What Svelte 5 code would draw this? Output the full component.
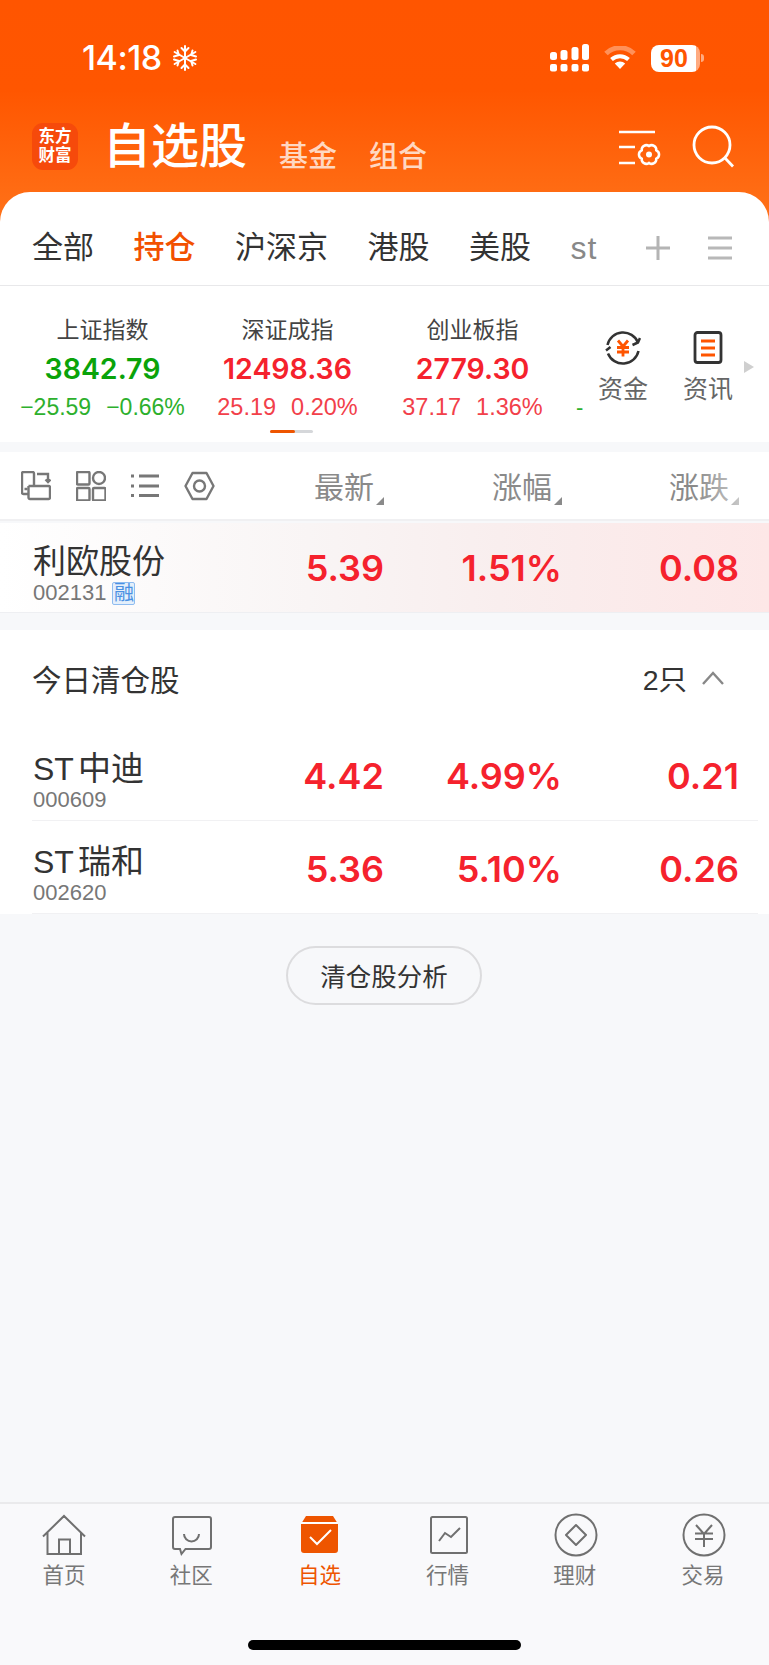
<script>
  const tabs = [['全部',''],['持仓','on'],['沪深京',''],['港股',''],['美股',''],['st','muted']];
  const indices = [
    { n:'上证指数', v:'3842.79', a:'−25.59', b:'−0.66%', c:'down' },
    { n:'深证成指', v:'12498.36', a:'25.19', b:'0.20%', c:'up' },
    { n:'创业板指', v:'2779.30', a:'37.17', b:'1.36%', c:'up' }
  ];
  const sold = [
    { n:'ST', m:'中迪', code:'000609', p:'4.42', r:'4.99%', d:'0.21' },
    { n:'ST', m:'瑞和', code:'002620', p:'5.36', r:'5.10%', d:'0.26' }
  ];
  const nav = ['首页','社区','自选','行情','理财','交易'];
</script>

<div class="page">
  <div class="masthead">
    <div class="top">
      <div class="status">
        <span class="time">14:18</span>
        <svg class="snow" width="26" height="26" viewBox="0 0 26 26" fill="none" stroke="#fff" stroke-width="2" stroke-linecap="round">
          <path d="M13 1v24M2.600 7l20.800 12M23.400 7 2.600 19"/>
          <path d="M9.500 3 13 6.500 16.500 3M9.500 23 13 19.500 16.500 23M2 11.500 6.800 10 5.500 5.500M24 11.500 19.200 10 20.500 5.500M2 14.500 6.800 16 5.500 20.500M24 14.500 19.200 16 20.500 20.500"/>
        </svg>
        <svg class="signal" width="39" height="28" viewBox="0 0 39 28" fill="#fff">
          <rect x="0" y="8" width="7" height="8" rx="2.500"/><rect x="10.500" y="6" width="7" height="10" rx="2.500"/><rect x="21.500" y="3" width="7" height="13" rx="2.500"/><rect x="32" y="0" width="7" height="16" rx="2.500"/>
          <rect x="0" y="20" width="7" height="7.500" rx="2"/><rect x="10.500" y="20" width="7" height="7.500" rx="2"/><rect x="21.500" y="20" width="7" height="7.500" rx="2"/><rect x="32" y="20" width="7" height="7.500" rx="2"/>
        </svg>
        <svg class="wifi" width="32" height="24" viewBox="0 0 32 24" fill="none">
          <path d="M2 7.500A20 20 0 0 1 30 7.500" stroke="#fff" stroke-opacity=".35" stroke-width="5"/>
          <path d="M7.500 13.500A12.500 12.500 0 0 1 24.500 13.500" stroke="#fff" stroke-width="4"/>
          <path d="M16 23 10.800 17.500A7.500 7.500 0 0 1 21.200 17.500Z" fill="#fff"/>
        </svg>
        <span class="battery">90</span>
      </div>
      <div class="title-row">
        <div class="logo"><span>东方</span><span>财富</span></div>
        <h1>自选股</h1>
        <span class="sub first">基金</span>
        <span class="sub">组合</span>
        <svg class="filter" width="42" height="40" viewBox="0 0 42 40" fill="none" stroke="#fff" stroke-width="2.500">
          <path d="M0 2h36M0 17h16M0 33h16"/>
          <g transform="translate(30 24.500) scale(1.2)">
            <path d="M6.060 3.500A3.800 3.800 0 0 1 0 7 3.800 3.800 0 0 1-6.060 3.500 3.800 3.800 0 0 1-6.060-3.500 3.800 3.800 0 0 1 0-7 3.800 3.800 0 0 1 6.060-3.500 3.800 3.800 0 0 1 6.060 3.500Z" stroke-width="2.100"/>
            <circle r="2.500" fill="#fff" stroke="none"/>
          </g>
        </svg>
        <svg class="search" width="44" height="44" viewBox="0 0 44 44" fill="none" stroke="#fff" stroke-width="2.800">
          <circle cx="20" cy="20" r="18"/><path d="M33 33 41 41.500"/>
        </svg>
      </div>
    </div>

    <nav class="tabs">
      {#each tabs as t}
        <span class="tab {t[1]}">{t[0]}</span>
      {/each}
      <svg class="plus" width="28" height="28" viewBox="0 0 28 28" stroke="#b4b4b4" stroke-width="3"><path d="M14 2v24M2 14h24"/></svg>
      <svg class="menu" width="24" height="24" viewBox="0 0 24 24" stroke="#b8b8b8" stroke-width="3"><path d="M0 2h24M0 12h24M0 22h24"/></svg>
    </nav>
  </div>

  <section class="indices">
    {#each indices as x}
      <div class="idx {x.c}">
        <div class="idx-name">{x.n}</div>
        <div class="idx-val">{x.v}</div>
        <div class="idx-sub"><span>{x.a}</span><span>{x.b}</span></div>
      </div>
    {/each}
    <span class="dash">-</span>
    <div class="tool t1">
      <svg width="36" height="36" viewBox="0 0 36 36" fill="none">
        <path d="M2.500 15A16 16 0 0 1 33 12.500M33.500 21A16 16 0 0 1 3 23.500" stroke="#333" stroke-width="2.500"/>
        <path d="M1 20.500 5.500 17M27.500 15 33 12.500 35 8" stroke="#333" stroke-width="2.500"/>
        <path d="M13 10.500l5 6 5-6M12 17.500h12M12 22h12M18 16.500v10" stroke="#ff5500" stroke-width="2.800"/>
      </svg>
      <span>资金</span>
    </div>
    <div class="tool t2">
      <svg width="36" height="36" viewBox="0 0 36 36" fill="none">
        <rect x="5" y="2.500" width="26" height="30" rx="2.500" stroke="#333" stroke-width="2.800"/>
        <path d="M11 11h14M11 18h14M11 25h14" stroke="#ff5500" stroke-width="2.800"/>
      </svg>
      <span>资讯</span>
    </div>
    <svg class="more" width="10" height="12" viewBox="0 0 10 12"><path d="M0 0 10 6 0 12Z" fill="#cfcfcf"/></svg>
    <div class="scroll"><i></i></div>
  </section>

  <div class="cols">
    <div class="cols-icons">
      <svg width="30" height="30" viewBox="0 0 30 30" fill="none" stroke="#777" stroke-width="2.400">
        <path d="M7 23H2.500A1.500 1.500 0 0 1 1 21.500V2.500A1.500 1.500 0 0 1 2.500 1h9A1.500 1.500 0 0 1 13 2.500V15"/>
        <path d="M7.500 15h20A1.500 1.500 0 0 1 29 16.500v10A1.500 1.500 0 0 1 27.500 28H9A1.500 1.500 0 0 1 7.500 26.500V15"/>
        <path d="M16 3h11v7M24.500 8.500 27 11l2.500-2.500M3.500 18h3"/>
      </svg>
      <svg width="30" height="30" viewBox="0 0 30 30" fill="none" stroke="#777" stroke-width="2.400">
        <rect x="1" y="1" width="12.500" height="12.500" rx="1"/><circle cx="23" cy="7" r="6"/>
        <rect x="1" y="17" width="12.500" height="12.500" rx="1"/><rect x="17" y="17" width="12.500" height="12.500" rx="1"/>
      </svg>
      <svg width="28" height="30" viewBox="0 0 28 30" fill="none" stroke="#777" stroke-width="3">
        <path d="M8 5h20M8 15h20M8 24.500h20"/><path d="M0 5h3M0 15h3M0 24.500h3"/>
      </svg>
      <svg width="31" height="30" viewBox="0 0 31 30" fill="none" stroke="#777" stroke-width="2.400">
        <path d="M8.500 2h14l7 13-7 13h-14l-7-13Z" stroke-linejoin="round"/><circle cx="15.500" cy="15" r="5.500"/>
      </svg>
    </div>
    <span class="col">最新<i></i></span>
    <span class="col">涨幅<i></i></span>
    <span class="col">涨跌<i></i></span>
    <div class="fade"></div>
  </div>

  <div class="row held">
    <div class="nm">
      <div class="name">利欧股份</div>
      <div class="code">002131<span class="tag">融</span></div>
    </div>
    <span class="num">5.39</span><span class="num">1.51%</span><span class="num">0.08</span>
  </div>

  <section class="sold">
    <div class="sold-head">
      <span class="sold-title">今日清仓股</span>
      <span class="count">2只</span>
      <svg width="22" height="14" viewBox="0 0 22 14" fill="none" stroke="#888" stroke-width="2.400"><path d="M1 13 11 2l10 11"/></svg>
    </div>
    {#each sold as s}
      <div class="row line">
        <div class="nm">
          <div class="name"><span class="st">{s.n}</span>{s.m}</div>
          <div class="code">{s.code}</div>
        </div>
        <span class="num">{s.p}</span><span class="num">{s.r}</span><span class="num">{s.d}</span>
      </div>
    {/each}
  </section>

  <div class="btn-wrap"><button class="analyse">清仓股分析</button></div>

  <footer class="bar">
    <div class="navs">
      {#each nav as label, i}
        <div class="nav" class:active={i === 2}>
          <svg width="48" height="44" viewBox="0 0 48 44" fill="none" stroke="#707070" stroke-width="2">
            {#if i === 0}
              <path d="M3 23.500 24 3l21 20.500M7.500 19.500V41H41V19.500M19 41V26.500h11V41"/>
            {:else if i === 1}
              <path d="M7 4h34a2 2 0 0 1 2 2v28a2 2 0 0 1-2 2H17.500L13.500 41 12 36H7a2 2 0 0 1-2-2V6a2 2 0 0 1 2-2Z"/><path d="M16 21a7.500 7.500 0 0 0 15 0"/>
            {:else if i === 2}
              <path d="M10 3h27l5 8v26a3 3 0 0 1-3 3H8a3 3 0 0 1-3-3V11Z" fill="#ee5500" stroke="none"/>
              <path d="M5 10h37M14 24l7 7 14-14" stroke="#fff" stroke-width="2"/>
            {:else if i === 3}
              <rect x="6" y="4" width="36" height="36" rx="1.500"/><path d="M14 28l6-8 6 4 9-9"/>
            {:else if i === 4}
              <circle cx="23" cy="22" r="20.500"/><path d="M23 12 33 22 23 32 13 22Z" stroke-linejoin="round"/>
            {:else}
              <circle cx="23" cy="22" r="20.500"/><path d="M15 12 23 21 31 12M14 20.500h18M14 26h18M23 21v13"/>
            {/if}
          </svg>
          <span>{label}</span>
        </div>
      {/each}
    </div>
    <div class="home"></div>
  </footer>
</div>

<style>
  :global(body) { margin: 0; background: #f7f8fa; }
  .page {
    width: 769px; height: 1665px; display: flex; flex-direction: column;
    background: #f7f8fa; overflow: hidden; color: #333;
    font-family: "Liberation Sans", "Noto Sans CJK SC", sans-serif;
  }
  .masthead { background: linear-gradient(180deg, #ff5500 0, #ff5600 90px, #ff7219 222px) no-repeat; background-size: 100% 222px; }
  .top { height: 192px; box-sizing: border-box; padding-top: 44px; }
  .status { display: flex; align-items: center; height: 28px; padding-left: 82px; color: #fff; }
  .time { font: 500 34px/28px Inter, sans-serif; width: 90px; letter-spacing: -.5px; white-space: nowrap; }
  .signal { margin-left: auto; }
  .wifi { margin-left: 15px; }
  .battery {
    position: relative; margin: 0 69px 0 15px; width: 49px; height: 27px; border-radius: 8px;
    background: linear-gradient(90deg, #fff 91%, rgba(255,255,255,.5) 91%);
    color: #ff5500; font: 700 25px/27px "Liberation Sans", sans-serif; padding-left: 9px; box-sizing: border-box;
  }
  .battery::after {
    content: ""; position: absolute; left: 50px; top: 9px; width: 3px; height: 8px;
    background: rgba(255,255,255,.5); border-radius: 0 3px 3px 0;
  }
  .title-row { display: flex; align-items: flex-end; height: 50px; margin-top: 49px; padding-left: 32px; color: #fff; }
  .logo {
    width: 46px; height: 47px; border-radius: 11px; background: #f64a0b; display: flex; flex-direction: column;
    align-items: center; justify-content: center; font-size: 16.500px; line-height: 19px; font-weight: 700; align-self: center;
  }
  .logo span { display: block; }
  h1 { margin: 0 0 -4px 25px; font-size: 48px; line-height: 56px; font-weight: 500; white-space: nowrap; }
  .sub { font-size: 29px; line-height: 36px; margin-left: 32px; color: rgba(255,255,255,.75); font-weight: 500; margin-bottom: -4px; }
  .sub.first { margin-left: 32px; }
  .filter { margin-left: auto; margin-bottom: 1px; }
  .search { margin-left: 31px; margin-right: 33px; margin-bottom: 2px; }

  .tabs {
    position: relative; height: 94px; box-sizing: border-box; background: #fff; border-radius: 30px 30px 0 0;
    display: flex; align-items: center; padding: 18px 0 0 32px; gap: 39.500px;
    border-bottom: 1px solid #e8e8ea;
  }
  .tab { font-size: 31px; line-height: 40px; color: #333; position: relative; white-space: nowrap; }
  .tab.on { color: #f25000; font-weight: 500; }
  .tab.on::after { content: ""; position: absolute; left: 17px; bottom: -22px; width: 27px; height: 3px; background: #f25000; border-radius: 2px 2px 0 0; }
  .tab.muted { color: #888; font-size: 32px; letter-spacing: 1px; }
  .plus { margin-left: 7px; }
  .menu { margin-left: -3px; }

  .indices { position: relative; background: #fff; height: 156px; display: flex; padding-left: 10px; box-sizing: border-box; }
  .idx { width: 185px; text-align: center; padding-top: 29px; flex: none; }
  .idx-name { font-size: 23px; line-height: 30px; color: #444; }
  .idx-val { font-family: Inter, sans-serif; font-size: 28.500px; font-weight: 600; line-height: 36px; margin-top: 6px; }
  .idx-sub { font-size: 23.500px; line-height: 26px; margin-top: 7px; display: flex; justify-content: center; gap: 15px; }
  .up { color: #f5222d; } .down .idx-val { color: #0aa30a; } .down .idx-sub { color: #2db02d; font-size: 23px; }
  .up .idx-sub { color: #f2404a; }
  .dash { position: absolute; left: 576px; top: 109px; color: #2db02d; font-size: 22px; line-height: 26px; }
  .tool { position: absolute; top: 44px; width: 80px; display: flex; flex-direction: column; align-items: center; font-size: 25px; line-height: 30px; color: #666; }
  .tool svg { display: block; margin-bottom: 8px; }
  .t1 { left: 583px; } .t2 { left: 668px; }
  .more { position: absolute; left: 744px; top: 75px; }
  .scroll { position: absolute; left: 270px; top: 144px; width: 43px; height: 3px; background: #d5d7da; border-radius: 2px; }
  .scroll i { display: block; width: 25px; height: 3px; background: #ee5500; border-radius: 2px; }

  .cols {
    position: relative; margin-top: 10px; height: 69px; box-sizing: border-box; background: #fff;
    display: grid; grid-template-columns: minmax(0, 1fr) 177px 178px 177px; align-items: center; padding: 4px 30px 0 21px;
    border-bottom: 2px solid #f0f0f2;
  }
  .cols-icons { display: flex; align-items: center; gap: 25px; margin-top: -3px; }
  .cols-icons svg { display: block; flex: none; }
  .col { font-size: 30px; color: #8a8a8a; text-align: right; padding-right: 10px; position: relative; line-height: 36px; }
  .col i { position: absolute; right: 0; bottom: 1px; border-style: solid; border-width: 0 0 8px 8px; border-color: transparent transparent #8a8a8a transparent; }
  .fade { position: absolute; right: 0; top: 0; bottom: 0; width: 75px; background: linear-gradient(90deg, rgba(255,255,255,0), rgba(255,255,255,.85)); }

  .row {
    display: grid; grid-template-columns: minmax(0, 1fr) 177px 178px 177px; align-items: center;
    padding: 0 30px 0 33px; box-sizing: border-box; background: #fff; position: relative;
  }
  .held { height: 89px; margin-top: 2px; background: linear-gradient(90deg, #fff 0, #f9f5f5 40%, #f9eeee 65%, #fde7e7 100%); margin-bottom: 18px; box-shadow: 0 1px 0 #eeeff2; }
  .line { height: 93px; }
  .line::after { content: ""; position: absolute; left: 32px; right: 11px; bottom: 0; height: 1px; background: #f1f1f3; }
  .nm { align-self: start; padding-top: 20px; }
  .line .nm { padding-top: 22px; }
  .name { font-size: 33px; line-height: 38px; color: #333; white-space: nowrap; }
  .st { font-size: 32px; margin-right: 4px; }
  .code { font-size: 22px; line-height: 24px; color: #777; display: flex; align-items: center; }
  .tag { margin-left: 6px; width: 23px; height: 23px; font-size: 20px; line-height: 21px; border: 1px solid #8fbcf0; color: #4a90e2; background: #e4effb; border-radius: 2px; text-align: center; box-sizing: border-box; overflow: hidden; }
  .num { font-family: Inter, sans-serif; font-size: 36px; line-height: 44px; font-weight: 600; color: #f5222d; text-align: right; }
  .line .num { padding-top: 2px; }

  .sold { background: #fff; }
  .sold-head { display: flex; align-items: center; height: 98px; box-sizing: border-box; padding: 0 45px 3px 32px; }
  .sold-title { font-size: 29.500px; color: #333; flex: 1; }
  .count { color: #333; margin-right: 15px; font-size: 28.500px; }

  .btn-wrap { display: flex; justify-content: center; padding-top: 32px; margin-left: -1px; }
  .analyse {
    width: 196px; height: 59px; border: 2px solid #dcdcde; border-radius: 30px; background: transparent;
    font-family: inherit; font-size: 25.500px; color: #333; padding: 0 0 3px;
  }

  .bar { margin-top: auto; height: 163px; background: #f9f9fb; border-top: 2px solid #eaeaec; box-sizing: border-box; position: relative; }
  .navs { display: grid; grid-template-columns: repeat(6, 1fr); padding-top: 9px; }
  .nav { display: flex; flex-direction: column; align-items: center; font-size: 21.500px; line-height: 30px; color: #777; }
  .nav svg { display: block; }
  .nav span { margin-top: 4px; }
  .nav:nth-child(n+2) span { margin-right: 2px; }
  .nav:nth-child(n+5) span { margin-right: 4px; }
  .nav.active { color: #ee5500; }
  .home { position: absolute; left: 248px; top: 136px; width: 273px; height: 10px; background: #000; border-radius: 5px; }
</style>
